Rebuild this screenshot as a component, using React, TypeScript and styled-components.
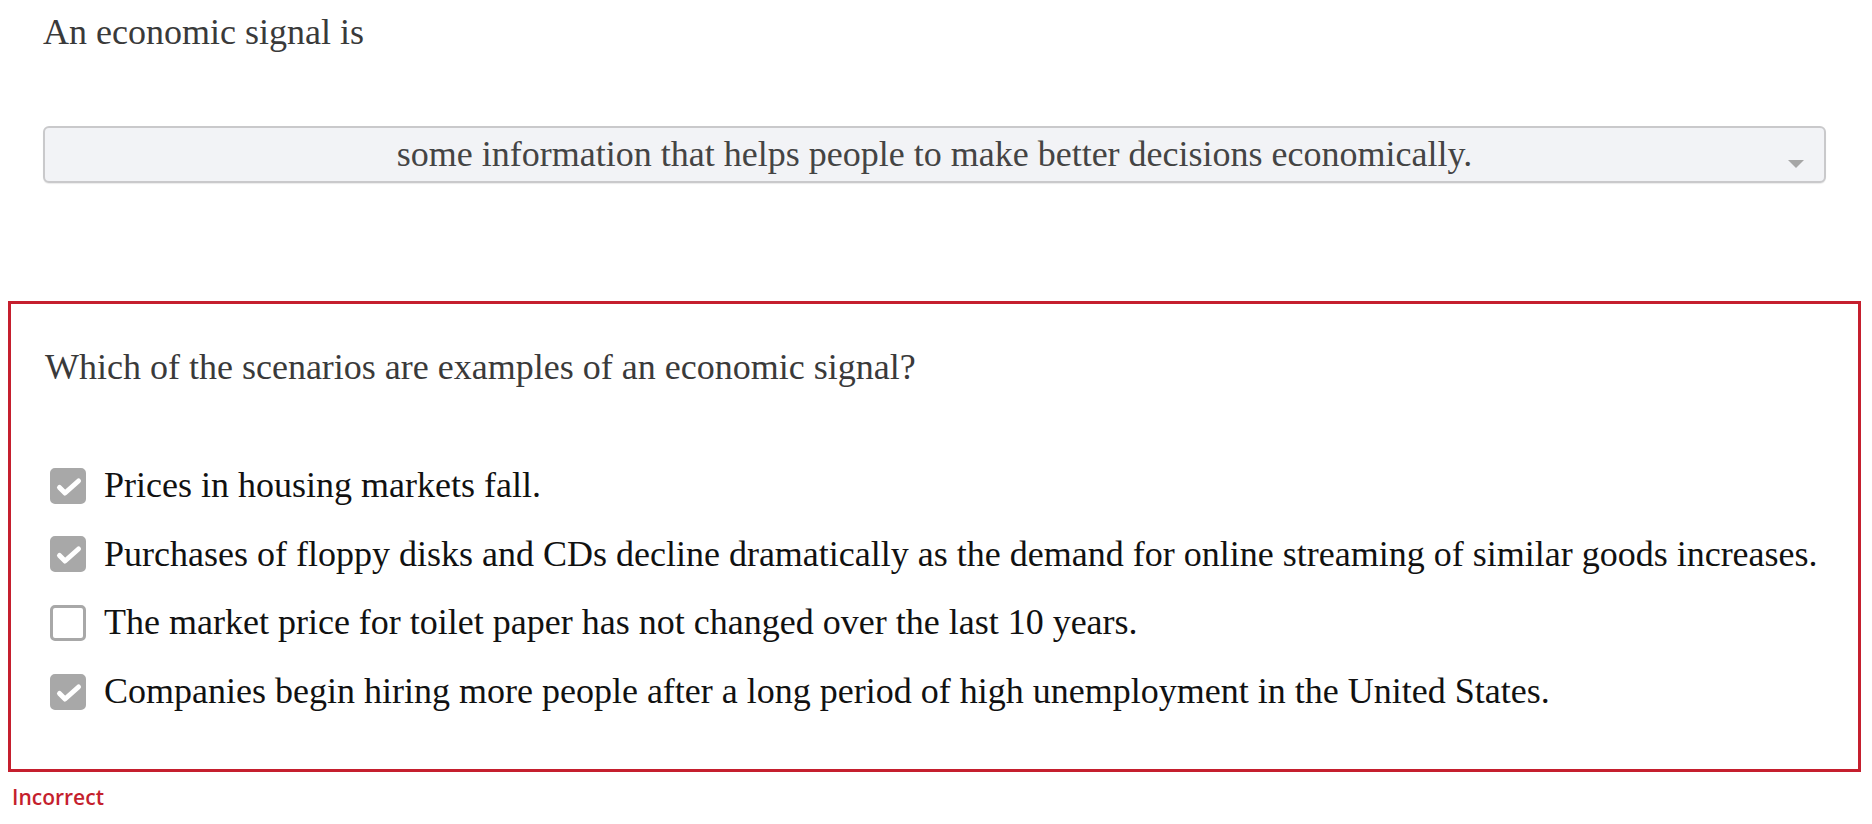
import React from 'react';
import styled, { createGlobalStyle } from 'styled-components';

const GlobalStyle = createGlobalStyle`
  html, body {
    margin: 0;
    padding: 0;
    background: #ffffff;
  }
  body {
    font-family: "Liberation Serif", "Times New Roman", serif;
  }
`;

const options = [
    { text: 'Prices in housing markets fall.', checked: true },
    { text: 'Purchases of floppy disks and CDs decline dramatically as the demand for online streaming of similar goods increases.', checked: true },
    { text: 'The market price for toilet paper has not changed over the last 10 years.', checked: false },
    { text: 'Companies begin hiring more people after a long period of high unemployment in the United States.', checked: true },
];

const App = () => {
    return (
        <>
            <GlobalStyle />
            <Page>
                <TopSection>
                    <Prompt>An economic signal is</Prompt>
                    <Dropdown>
                        <DropdownText>some information that helps people to make better decisions economically.</DropdownText>
                        <Caret />
                    </Dropdown>
                </TopSection>
                <QuestionBox>
                    <Question>Which of the scenarios are examples of an economic signal?</Question>
                    <OptionList>
                        {options.map(o => (
                            <OptionRow key={o.text}>
                                <Checkbox checked={o.checked}>
                                    {o.checked && (
                                        <svg width="30" height="30" viewBox="0 0 30 30">
                                            <polyline
                                                points="6.5,16.5 12,22 25.5,10"
                                                fill="none"
                                                stroke="#ffffff"
                                                strokeWidth="5"
                                                strokeLinecap="round"
                                                strokeLinejoin="round"
                                            />
                                        </svg>
                                    )}
                                </Checkbox>
                                <OptionText>{o.text}</OptionText>
                            </OptionRow>
                        ))}
                    </OptionList>
                </QuestionBox>
                <Feedback>Incorrect</Feedback>
            </Page>
        </>
    );
};

export default App;

const Page = styled.div`
    display: flex;
    flex-direction: column;
    width: 1872px;
`;

const TopSection = styled.div`
    display: flex;
    flex-direction: column;
    margin: 0 46px 0 43px;
    padding-top: 11px;
`;

const Prompt = styled.div`
    font-size: 36px;
    line-height: 43px;
    color: #3a3a3a;
`;

const Dropdown = styled.div`
    position: relative;
    margin-top: 72px;
    height: 57px;
    box-sizing: border-box;
    display: flex;
    align-items: center;
    justify-content: center;
    background: #f2f3f6;
    border: 2px solid #c9c9cb;
    border-radius: 6px;
    box-shadow: 0 1px 1px rgba(0, 0, 0, 0.08);
`;

const DropdownText = styled.span`
    font-size: 36px;
    line-height: 43px;
    color: #444444;
`;

// small grey triangle sitting over the right end of the select
const Caret = styled.span`
    position: absolute;
    right: 20px;
    top: 32px;
    width: 0;
    height: 0;
    border-left: 8px solid transparent;
    border-right: 8px solid transparent;
    border-top: 8px solid #a6a6a6;
`;

const QuestionBox = styled.div`
    margin: 118px 11px 0 8px;
    border: 3px solid #c51f2e;
    padding: 42px 34px 56px 34px;
    display: flex;
    flex-direction: column;
`;

const Question = styled.div`
    font-size: 36px;
    line-height: 43px;
    color: #3a3a3a;
`;

const OptionList = styled.div`
    display: flex;
    flex-direction: column;
    gap: 25.7px;
    margin-top: 75px;
    padding-left: 5px;
`;

const OptionRow = styled.div`
    display: flex;
    align-items: center;
    gap: 18px;
    height: 43px;
`;

const Checkbox = styled.div<{ checked: boolean }>`
    width: 36px;
    height: 36px;
    box-sizing: border-box;
    flex-shrink: 0;
    border-radius: 5px;
    display: flex;
    align-items: center;
    justify-content: center;
    background: ${props => (props.checked ? '#a8a8a8' : '#ffffff')};
    border: 3px solid #a8a8a8;
`;

const OptionText = styled.span`
    font-size: 36px;
    line-height: 43px;
    color: #111111;
`;

const Feedback = styled.div`
    margin: 11px 0 0 12px;
    font-family: "Open Sans", "Noto Sans", sans-serif;
    font-weight: 600;
    font-size: 21px;
    line-height: 28px;
    color: #c51f2e;
`;
